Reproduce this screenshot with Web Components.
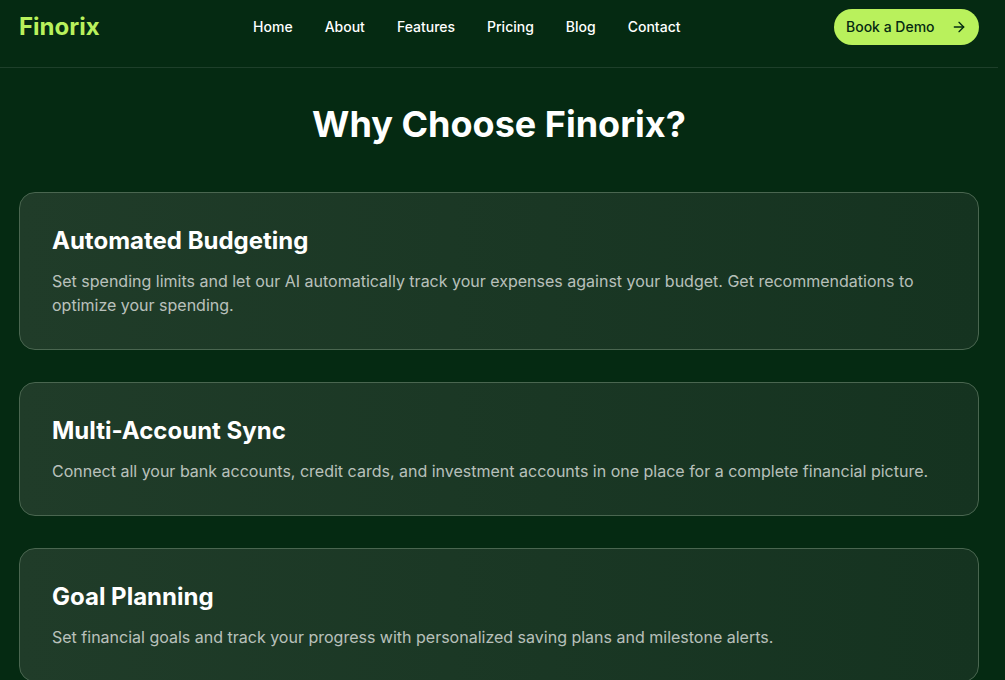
<!DOCTYPE html>
<html lang="en">
<head>
<meta charset="utf-8">
<title>Finorix</title>
<style>
  html {
    background: #052a12;
  }
  body {
    margin: 0;
    width: 998px;
    background: #052a12;
    color: #fff;
    font-family: Inter, "Liberation Sans", sans-serif;
    height: 680px;
    overflow: hidden;
  }
</style>
</head>
<body>
<site-header>
  <a slot="nav" href="#">Home</a>
  <a slot="nav" href="#">About</a>
  <a slot="nav" href="#">Features</a>
  <a slot="nav" href="#">Pricing</a>
  <a slot="nav" href="#">Blog</a>
  <a slot="nav" href="#">Contact</a>
</site-header>
<why-section heading="Why Choose Finorix?">
  <feature-card title-text="Automated Budgeting">Set spending limits and let our AI automatically track your expenses against your budget. Get recommendations to optimize your spending.</feature-card>
  <feature-card title-text="Multi-Account Sync">Connect all your bank accounts, credit cards, and investment accounts in one place for a complete financial picture.</feature-card>
  <feature-card title-text="Goal Planning">Set financial goals and track your progress with personalized saving plans and milestone alerts.</feature-card>
</why-section>

<script>
class SiteHeader extends HTMLElement {
  constructor() {
    super();

    const template = document.createElement( 'template' );
    template.innerHTML = `
    <style>
    :host {
      display: block;
      width: 1005px;
      box-sizing: border-box;
      border-bottom: solid 1px rgba( 255, 255, 255, 0.1 );
    }

    div.bar {
      align-items: center;
      box-sizing: border-box;
      display: flex;
      height: 67px;
      justify-content: space-between;
      padding: 9px 19px 22px 19px;
      width: 998px;
    }

    span.logo {
      color: #b9f15c;
      font-size: 24px;
      font-weight: 700;
      line-height: 36px;
    }

    nav {
      display: flex;
      gap: 32px;
    }

    ::slotted( a ) {
      color: #fff;
      font-size: 14px;
      font-weight: 500;
      line-height: 20px;
      text-decoration: none;
    }

    a.demo {
      align-items: center;
      background: #b9f15c;
      border-radius: 18px;
      box-sizing: border-box;
      color: #052a12;
      display: flex;
      font-size: 14px;
      font-weight: 500;
      gap: 16px;
      height: 36px;
      padding: 0 12px;
      text-decoration: none;
      width: 145px;
    }

    a.demo span {
      display: block;
      line-height: 20px;
      margin-top: -1px;
    }

    svg {
      display: block;
      flex: none;
    }
    </style>

    <div class="bar">
      <span class="logo">Finorix</span>
      <nav><slot name="nav"></slot></nav>
      <a class="demo" href="#"><span>Book a Demo</span>
        <svg width="16" height="16" viewBox="0 0 24 24" fill="none" stroke="currentColor" stroke-width="2" stroke-linecap="round" stroke-linejoin="round"><path d="M5 12h14"/><path d="m12 5 7 7-7 7"/></svg>
      </a>
    </div>
    `;

    this._shadowRoot = this.attachShadow( {mode: 'open'} );
    this._shadowRoot.appendChild( template.content.cloneNode( true ) );
  }
}

class WhySection extends HTMLElement {
  constructor() {
    super();

    const template = document.createElement( 'template' );
    template.innerHTML = `
    <style>
    :host {
      display: block;
      padding: 32px 19px 32px 19px;
    }

    h2 {
      color: #fff;
      font-size: 36px;
      font-weight: 700;
      line-height: 48px;
      margin: 0 0 44px 0;
      text-align: center;
    }

    div.list {
      display: flex;
      flex-direction: column;
      gap: 32px;
    }
    </style>

    <h2></h2>
    <div class="list"><slot></slot></div>
    `;

    this._shadowRoot = this.attachShadow( {mode: 'open'} );
    this._shadowRoot.appendChild( template.content.cloneNode( true ) );
    this._shadowRoot.querySelector( 'h2' ).textContent = this.getAttribute( 'heading' );
  }
}

class FeatureCard extends HTMLElement {
  constructor() {
    super();

    const template = document.createElement( 'template' );
    template.innerHTML = `
    <style>
    :host {
      background: linear-gradient( 90deg, #203c29, #153320 );
      border: solid 1px #4a6650;
      border-radius: 16px;
      box-sizing: border-box;
      display: block;
      padding: 32px;
    }

    h3 {
      color: #fff;
      font-size: 24px;
      font-weight: 700;
      line-height: 32px;
      margin: 0 0 12px 0;
    }

    p {
      color: rgba( 255, 255, 255, 0.7 );
      font-size: 16px;
      font-weight: 400;
      line-height: 24px;
      margin: 0;
    }
    </style>

    <h3></h3>
    <p><slot></slot></p>
    `;

    this._shadowRoot = this.attachShadow( {mode: 'open'} );
    this._shadowRoot.appendChild( template.content.cloneNode( true ) );
    this._shadowRoot.querySelector( 'h3' ).textContent = this.getAttribute( 'title-text' );
  }
}

window.customElements.define( 'site-header', SiteHeader );
window.customElements.define( 'why-section', WhySection );
window.customElements.define( 'feature-card', FeatureCard );
</script>
</body>
</html>
